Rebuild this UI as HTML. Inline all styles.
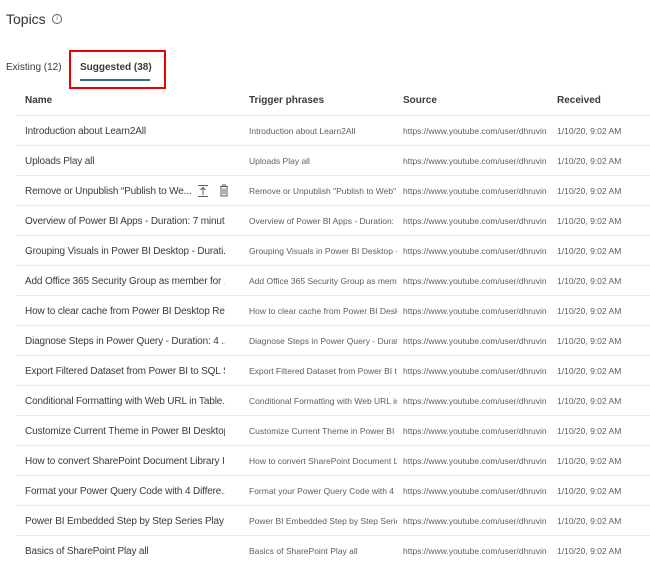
<!DOCTYPE html>
<html><head><style>
body{margin:0;width:650px;height:562px;background:#fff;font-family:"Liberation Sans",sans-serif;color:#323130;position:relative;overflow:hidden}
.a{position:absolute;white-space:nowrap}
.row{position:absolute;left:16px;width:634px;height:30px;border-top:1px solid #edebe9}
.c{position:absolute;top:0;line-height:30px;white-space:nowrap;overflow:hidden}
.n{left:9px;top:1px;width:200px;font-size:10px;color:#3b3a39;letter-spacing:-0.15px}
.t{left:233px;width:148px;font-size:8.5px;color:#605e5c}
.s{left:387px;font-size:8.5px;color:#605e5c}
.r{left:541px;font-size:8.5px;color:#605e5c}
.h{font-size:10px;font-weight:bold;color:#3b3a39;top:95px}
</style></head><body>
<div class="a" style="left:6px;top:11px;font-size:14px;color:#323130">Topics</div>
<div class="a" style="left:52px;top:14px;width:8px;height:8px;border:1px solid #605e5c;border-radius:50%;font-size:6px;line-height:8px;text-align:center;color:#605e5c">i</div>
<div class="a" style="left:6px;top:62px;font-size:10px;color:#3b3a39">Existing (12)</div>
<div class="a" style="left:80px;top:62px;font-size:10px;font-weight:bold;color:#3b3a39">Suggested (38)</div>
<div class="a" style="left:80px;top:79px;width:70px;height:2px;background:#2f6f7e"></div>
<div class="a" style="left:69px;top:50px;width:93px;height:35px;border:2px solid #e00"></div>
<div class="a h" style="left:25px">Name</div>
<div class="a h" style="left:249px">Trigger phrases</div>
<div class="a h" style="left:403px">Source</div>
<div class="a h" style="left:557px">Received</div>
<div id="rows"></div>
<svg class="a" style="left:197px;top:184px" width="12" height="14" viewBox="0 0 12 14"><path d="M1 1.5H11M6 3.5V11M3.5 6L6 3.5L8.5 6M1 12.5H11" stroke="#605e5c" stroke-width="1" fill="none"/></svg>
<svg class="a" style="left:219px;top:184px" width="10" height="13" viewBox="0 0 10 13"><path d="M1 2.5H9M3.5 2.5V1H6.5V2.5M2 2.5V12H8V2.5M4 4.5V10.5M6 4.5V10.5" stroke="#605e5c" stroke-width="1" fill="none"/></svg>
<script>
var d=[["Introduction about Learn2All","Introduction about Learn2All"],["Uploads Play all","Uploads Play all"],["Remove or Unpublish “Publish to We...","Remove or Unpublish \"Publish to Web\""],["Overview of Power BI Apps - Duration: 7 minut...","Overview of Power BI Apps - Duration: 7"],["Grouping Visuals in Power BI Desktop - Durati...","Grouping Visuals in Power BI Desktop - D"],["Add Office 365 Security Group as member for ...","Add Office 365 Security Group as membe"],["How to clear cache from Power BI Desktop Re...","How to clear cache from Power BI Deskto"],["Diagnose Steps in Power Query - Duration: 4 ...","Diagnose Steps in Power Query - Duratio"],["Export Filtered Dataset from Power BI to SQL S...","Export Filtered Dataset from Power BI to"],["Conditional Formatting with Web URL in Table...","Conditional Formatting with Web URL in"],["Customize Current Theme in Power BI Desktop...","Customize Current Theme in Power BI D"],["How to convert SharePoint Document Library I...","How to convert SharePoint Document Lib"],["Format your Power Query Code with 4 Differe...","Format your Power Query Code with 4 Di"],["Power BI Embedded Step by Step Series Play all","Power BI Embedded Step by Step Series"],["Basics of SharePoint Play all","Basics of SharePoint Play all"]];
var h="";d.forEach(function(x,i){h+='<div class="row" style="top:'+(115+i*30)+'px"><div class="c n"'+(i==2?' style="width:168px"':'')+'>'+x[0]+'</div><div class="c t">'+x[1]+'</div><div class="c s">https://www.youtube.com/user/dhruvin</div><div class="c r">1/10/20, 9:02 AM</div></div>'});
document.getElementById("rows").innerHTML=h;
</script>
</body></html>
